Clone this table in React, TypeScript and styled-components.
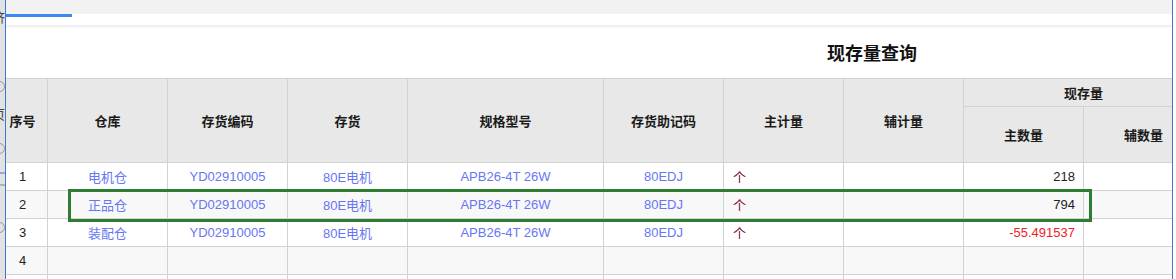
import React from 'react'
import styled, { createGlobalStyle } from 'styled-components'

const GlobalStyle = createGlobalStyle`
  html, body {
    margin: 0;
    padding: 0;
    background: #fff;
  }
  body {
    font-family: "Liberation Sans", "Noto Sans CJK SC", sans-serif;
    font-size: 13px;
    color: #333;
  }
`

const Page = styled.div`
  display: flex;
  height: 279px;
  width: 1176px;
  overflow: hidden;
`

const SideStrip = styled.div`
  width: 5px;
  flex: none;
  background: #e2e2e2;
  overflow: hidden;
  display: flex;
  flex-direction: column;
  align-items: flex-end;
`

const SideGlyph = styled.span<{ $top: number }>`
  display: block;
  flex: none;
  margin-top: ${({ $top }) => $top}px;
  font-size: 13px;
  line-height: 13px;
  color: #444;
  white-space: nowrap;
`

const SideRing = styled.span<{ $top: number }>`
  display: block;
  margin-top: ${({ $top }) => $top}px;
  width: 9px;
  height: 9px;
  border: 1px solid #999;
  border-radius: 50%;
  flex: none;
`

const SideBars = styled.span`
  display: block;
  margin-top: 18px;
  width: 5px;
  height: 10px;
  border-top: 2px solid #9aa8d8;
  border-bottom: 2px solid #9cc29a;
  flex: none;
`

const Frame = styled.div`
  position: relative;
  width: 1166px;
  flex: none;
  border-left: 1px solid #3b78d6;
  border-right: 1px solid #3b78d6;
  overflow: hidden;
  display: flex;
  flex-direction: column;
`

const Rest = styled.div`
  flex: 1;
  background: #fff;
`

const TopBand = styled.div`
  height: 14px;
  background: #f2f2f2;
  flex: none;
`

const TabBar = styled.div`
  height: 11px;
  background: #fff;
  flex: none;
  box-shadow: 0 2px 2px rgba(0, 0, 0, 0.08);
  position: relative;
  z-index: 1;
`

const TabIndicator = styled.div`
  width: 66px;
  height: 3px;
  background: #3d88f2;
`

const TitleBar = styled.div`
  height: 53px;
  flex: none;
  display: flex;
  align-items: center;
  justify-content: center;
  padding-left: 566px;
  font-size: 18px;
  font-weight: bold;
  color: #111;
`

const TableWrap = styled.div`
  position: relative;
  margin-left: -9px;
`

const Grid = styled.table`
  border-collapse: collapse;
  table-layout: fixed;
  width: 1206px;
`

const HeadCell = styled.th<{ $h: number }>`
  height: ${({ $h }) => $h - 1}px;
  padding: 0;
  background: #e8e8e8;
  border: 1px solid #d2d2d2;
  font-weight: bold;
  font-size: 13px;
  color: #1a1a1a;
  text-align: center;
  vertical-align: middle;
`

const Row = styled.tr<{ $alt: boolean }>`
  background: ${({ $alt }) => ($alt ? '#f8f8f8' : '#fff')};
`

const Cell = styled.td<{ $align?: 'left' | 'center' | 'right'; $tone?: 'link' | 'unit' | 'neg' }>`
  height: 27px;
  padding: 0 ${({ $align }) => ($align === 'right' ? '8px' : '0')} 0 ${({ $align }) => ($align === 'left' ? '9px' : '0')};
  border: 1px solid #d2d2d2;
  text-align: ${({ $align }) => $align || 'center'};
  vertical-align: middle;
  white-space: nowrap;
  overflow: hidden;
  color: ${({ $tone }) =>
    $tone === 'link' ? '#6676f4' : $tone === 'unit' ? '#7a0a2a' : $tone === 'neg' ? '#f0202a' : '#222'};
`

const Highlight = styled.div`
  position: absolute;
  left: 71px;
  top: 111px;
  width: 1024px;
  height: 33px;
  box-sizing: border-box;
  border: 3px solid #2f7d32;
  pointer-events: none;
`

const widths = [50, 120, 120, 120, 196, 120, 120, 120, 120, 120]

interface StockRow {
  no: number
  warehouse: string
  code: string
  name: string
  spec: string
  mnemonic: string
  unit: string
  qty: string
  negative?: boolean
}

const rows: StockRow[] = [
  { no: 1, warehouse: '电机仓', code: 'YD02910005', name: '80E电机', spec: 'APB26-4T 26W', mnemonic: '80EDJ', unit: '个', qty: '218' },
  { no: 2, warehouse: '正品仓', code: 'YD02910005', name: '80E电机', spec: 'APB26-4T 26W', mnemonic: '80EDJ', unit: '个', qty: '794' },
  { no: 3, warehouse: '装配仓', code: 'YD02910005', name: '80E电机', spec: 'APB26-4T 26W', mnemonic: '80EDJ', unit: '个', qty: '-55.491537', negative: true },
]

const App = () => {
  return (
    <>
      <GlobalStyle />
      <Page>
        <SideStrip>
          <SideGlyph $top={11}>济</SideGlyph>
          <SideRing $top={57} />
          <SideGlyph $top={16}>页</SideGlyph>
          <SideRing $top={22} />
          <SideBars />
          <SideRing $top={36} />
        </SideStrip>
        <Frame>
          <TopBand />
          <TabBar>
            <TabIndicator />
          </TabBar>
          <TitleBar>现存量查询</TitleBar>
          <TableWrap>
            <Grid>
              <colgroup>
                {widths.map((w, i) => (
                  <col key={i} style={{ width: w }} />
                ))}
              </colgroup>
              <thead>
                <tr>
                  <HeadCell $h={84} rowSpan={2}>序号</HeadCell>
                  <HeadCell $h={84} rowSpan={2}>仓库</HeadCell>
                  <HeadCell $h={84} rowSpan={2}>存货编码</HeadCell>
                  <HeadCell $h={84} rowSpan={2}>存货</HeadCell>
                  <HeadCell $h={84} rowSpan={2}>规格型号</HeadCell>
                  <HeadCell $h={84} rowSpan={2}>存货助记码</HeadCell>
                  <HeadCell $h={84} rowSpan={2}>主计量</HeadCell>
                  <HeadCell $h={84} rowSpan={2}>辅计量</HeadCell>
                  <HeadCell $h={28} colSpan={2}>现存量</HeadCell>
                </tr>
                <tr>
                  <HeadCell $h={56}>主数量</HeadCell>
                  <HeadCell $h={56}>辅数量</HeadCell>
                </tr>
              </thead>
              <tbody>
                {rows.map((r, i) => (
                  <Row key={r.no} $alt={i % 2 === 1}>
                    <Cell>{r.no}</Cell>
                    <Cell $tone="link">{r.warehouse}</Cell>
                    <Cell $tone="link">{r.code}</Cell>
                    <Cell $tone="link">{r.name}</Cell>
                    <Cell $tone="link">{r.spec}</Cell>
                    <Cell $tone="link">{r.mnemonic}</Cell>
                    <Cell $align="left" $tone="unit">{r.unit}</Cell>
                    <Cell />
                    <Cell $align="right" $tone={r.negative ? 'neg' : undefined}>{r.qty}</Cell>
                    <Cell />
                  </Row>
                ))}
                <Row $alt={true}>
                  <Cell>4</Cell>
                  {widths.slice(1).map((_, i) => (
                    <Cell key={i} />
                  ))}
                </Row>
                <Row $alt={false}>
                  {widths.map((_, i) => (
                    <Cell key={i} />
                  ))}
                </Row>
              </tbody>
            </Grid>
            <Highlight />
          </TableWrap>
        </Frame>
        <Rest />
      </Page>
    </>
  )
}

export default App
